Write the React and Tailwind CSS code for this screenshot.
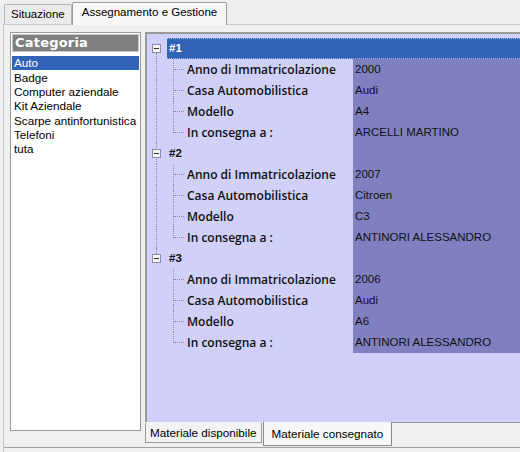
import React from 'react';

const categories = ['Auto', 'Badge', 'Computer aziendale', 'Kit Aziendale', 'Scarpe antinfortunistica', 'Telefoni', 'tuta'];

const cars = [
  { id: '#1', year: '2000', brand: 'Audi', model: 'A4', owner: 'ARCELLI MARTINO' },
  { id: '#2', year: '2007', brand: 'Citroen', model: 'C3', owner: 'ANTINORI ALESSANDRO' },
  { id: '#3', year: '2006', brand: 'Audi', model: 'A6', owner: 'ANTINORI ALESSANDRO' },
];

const fields = [
  ['Anno di Immatricolazione', 'year'],
  ['Casa Automobilistica', 'brand'],
  ['Modello', 'model'],
  ['In consegna a :', 'owner'],
];

// little [-] box of the tree
const Minus = () => (
  <div className="w-[9px] h-[9px] border border-[#8c8ca8] bg-[#f4f4f4] flex items-center justify-center shrink-0">
    <div className="w-[5px] h-px bg-[#333]" />
  </div>
);

const GroupRow = ({ car, selected, last }) => (
  <div className="flex h-[21px] relative">
    {/* outer vertical connector */}
    <div className={`absolute left-[8px] w-0 border-l border-dotted border-[#8a8aa8] ${car.id === '#1' ? 'top-[15px] bottom-0' : last ? 'top-0 h-[6px]' : 'top-0 bottom-0'}`} />
    <div className="w-[19px] flex items-center pl-[4px] shrink-0 relative z-10">
      <Minus />
    </div>
    {selected ? (
      <div className="flex-1 flex items-center bg-[#3163b6] text-white font-bold pl-[2px] border-y border-dotted border-[#9fb3de]">
        {car.id}
      </div>
    ) : (
      <>
        <div className="w-[186px] flex items-center font-bold text-[#111] pl-[2px]">{car.id}</div>
        <div className="flex-1 bg-[#8080c0]" />
      </>
    )}
  </div>
);

const FieldRow = ({ label, value, last, outerLine }) => (
  <div className="flex h-[21px] relative">
    {outerLine && <div className="absolute left-[8px] top-0 bottom-0 border-l border-dotted border-[#8a8aa8]" />}
    <div className={`absolute left-[25px] w-0 border-l border-dotted border-[#8a8aa8] top-0 ${last ? 'h-[11px]' : 'bottom-0'}`} />
    <div className="w-[205px] flex items-center shrink-0">
      <div className="w-[26px]" />
      <div className="w-[10px] border-t border-dotted border-[#8a8aa8] mr-[3px]" />
      <span className="font-['Open_Sans',sans-serif] font-semibold text-[12px] text-[#111]">{label}</span>
    </div>
    <div className="flex-1 bg-[#8080c0] flex items-center pl-[2px] text-[#111]">{value}</div>
  </div>
);

export default function App() {
  return (
    <div className="w-[520px] h-[452px] overflow-hidden bg-[#efefef] font-['Liberation_Sans',Arial,sans-serif] text-[11.5px] text-black flex flex-col">
      {/* top tabs */}
      <div className="h-[24px] flex items-end pl-[4px] shrink-0">
        <div className="h-[20px] px-[6px] flex items-center border border-b-0 border-[#b5b5b5] bg-[#ebebeb] rounded-t-[2px] text-[11.5px]">Situazione</div>
        <div className="h-[23px] px-[9px] pb-[2px] flex items-center border border-b-0 border-[#9a9a9a] bg-[#f7f7f7] rounded-t-[2px] text-[11.5px] -mb-px relative z-10">
          Assegnamento e Gestione
        </div>
      </div>

      {/* tab page */}
      <div className="flex-1 flex flex-col ml-[3px] border-l border-t border-[#c8c8c8] bg-[#f0f0f0] min-h-0">
        <div className="flex-1 flex min-h-0 pt-[7px] pl-[6px]">
          {/* category list */}
          <div className="w-[131px] h-[399px] border border-[#9a9a9a] bg-white flex flex-col shrink-0">
            <div className="m-[1px] h-[18px] bg-[#7f7f7f] border border-[#c8c8c8] text-white font-bold text-[13px] flex items-center pl-[2px] font-['DejaVu_Sans',sans-serif] tracking-[0.2px]">
              Categoria
            </div>
            <div className="mt-[3px] flex flex-col px-px">
              {categories.map((c, i) => (
                <div key={c} className={`h-[14.33px] flex items-center pl-[2px] whitespace-nowrap text-[11.7px] ${i === 0 ? 'bg-[#3163b6] text-white' : ''}`}>{c}</div>
              ))}
            </div>
          </div>

          {/* right part */}
          <div className="flex-1 flex flex-col ml-[4px]">
            <div className="h-[390px] border-l-2 border-t-2 border-l-[#9a9a9a] border-t-[#9a9a9a] bg-[#d0d0f8] pt-[4px] pl-px text-[11.5px]">
              {cars.map((car, ci) => (
                <div key={car.id}>
                  <GroupRow car={car} selected={ci === 0} last={ci === cars.length - 1} />
                  {fields.map(([label, key], fi) => (
                    <FieldRow key={key} label={label} value={car[key]} last={fi === fields.length - 1} outerLine={ci < cars.length - 1} />
                  ))}
                </div>
              ))}
            </div>
            {/* bottom tabs */}
            <div className="h-[25px] flex items-start">
              <div className="mt-px h-[20px] px-[4px] flex items-center border border-t-0 border-[#9a9a9a] bg-[#f3f3f3] text-[11.7px]">Materiale disponibile</div>
              <div className="h-[24px] px-[8px] ml-[1px] flex items-center border border-t-0 border-[#8a8a8a] bg-[#f7f7f7] text-[11.7px]">Materiale consegnato</div>
              <div className="flex-1 h-[2px] border-t border-[#9a9a9a]" />
            </div>
          </div>
        </div>
        <div className="h-[1px] bg-[#a0a0a0] shrink-0" />
        <div className="h-[4px] shrink-0" />
      </div>
    </div>
  );
}
